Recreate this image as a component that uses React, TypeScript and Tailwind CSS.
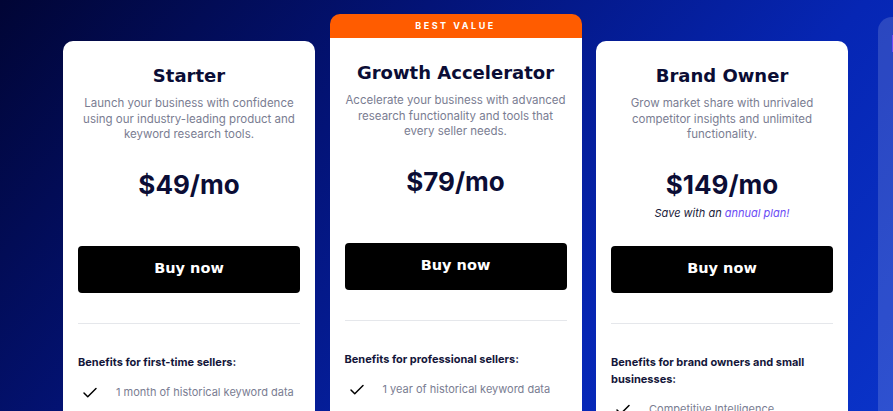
import { Check } from "lucide-react";

type Plan = {
  name: string;
  description: string;
  price: string;
  audience: string;
  features: string[];
  badge?: string;
  note?: boolean;
};

const plans: Plan[] = [
  {
    name: "Starter",
    description:
      "Launch your business with confidence using our industry-leading product and keyword research tools.",
    price: "$49/mo",
    audience: "Benefits for first-time sellers:",
    features: ["1 month of historical keyword data"],
  },
  {
    name: "Growth Accelerator",
    description:
      "Accelerate your business with advanced research functionality and tools that every seller needs.",
    price: "$79/mo",
    audience: "Benefits for professional sellers:",
    features: ["1 year of historical keyword data"],
    badge: "BEST VALUE",
  },
  {
    name: "Brand Owner",
    description:
      "Grow market share with unrivaled competitor insights and unlimited functionality.",
    price: "$149/mo",
    audience: "Benefits for brand owners and small businesses:",
    features: ["Competitive Intelligence"],
    note: true,
  },
];

const heading = { fontFamily: '"DejaVu Sans", Verdana, sans-serif' };

function PlanCard({ plan }: { plan: Plan }) {
  return (
    <div className={`w-[252px] shrink-0 ${plan.badge ? "mt-[14px]" : "mt-[41px]"}`}>
      {plan.badge && (
        <div className="h-[24px] rounded-t-[10px] bg-[#ff5c00] flex items-center justify-center text-[9px] font-bold tracking-[0.28em] text-white">
          {plan.badge}
        </div>
      )}
      <div
        className={`bg-white px-[15px] pt-[24px] pb-[40px] h-[420px] ${
          plan.badge ? "rounded-b-[10px]" : "rounded-[10px]"
        }`}
      >
        <h2
          className="text-center text-[18px] font-bold leading-[22px] text-[#0b0d35]"
          style={heading}
        >
          {plan.name}
        </h2>
        <p className="mx-auto mt-[9px] w-[221px] text-center text-[11.5px] leading-[15.5px] text-[#7a7d92]">
          {plan.description}
        </p>
        <div className="mt-[26px] text-center text-[26px] font-bold leading-[32px] text-[#0b0d35]">
          {plan.price}
        </div>
        <div className="h-[45px] pt-[4px] text-center text-[11px] italic text-[#1a1c3a]">
          {plan.note && (
            <>
              Save with an <span className="text-[#6b4cf5]">annual plan!</span>
            </>
          )}
        </div>
        <button
          className="h-[47px] w-full rounded-[4px] bg-black text-[14.5px] font-bold text-white"
          style={heading}
        >
          Buy now
        </button>
        <div className="mt-[30px] h-px bg-[#e5e7eb]" />
        <div className="mt-[30px] text-[11px] font-bold leading-[17px] text-[#14163a]">
          {plan.audience}
        </div>
        <ul className="mt-[13px] space-y-[10px]">
          {plan.features.map((f) => (
            <li key={f} className="flex items-center gap-[17px] pl-[3px]">
              <Check className="h-[18px] w-[18px] text-black" strokeWidth={2} />
              <span className="text-[11px] text-[#7a7d92]">{f}</span>
            </li>
          ))}
        </ul>
      </div>
    </div>
  );
}

export default function App() {
  return (
    <div
      className="relative h-[411px] w-[893px] overflow-hidden bg-[linear-gradient(130deg,#010535_0%,#031377_35%,#0626b4_70%,#0a33c8_100%)]"
      style={{ fontFamily: 'Inter, "Noto Sans", sans-serif' }}
    >
      <div className="flex gap-[14.5px] pl-[63px]">
        {plans.map((p) => (
          <PlanCard key={p.name} plan={p} />
        ))}
        <div className="mt-[17px] ml-[15px] h-[420px] w-[252px] shrink-0 rounded-[14px] bg-white/15 pt-[18px] pl-[14px]">
          <div className="h-[17px] w-[40px] bg-[#6b4cf5]" />
        </div>
      </div>
    </div>
  );
}
